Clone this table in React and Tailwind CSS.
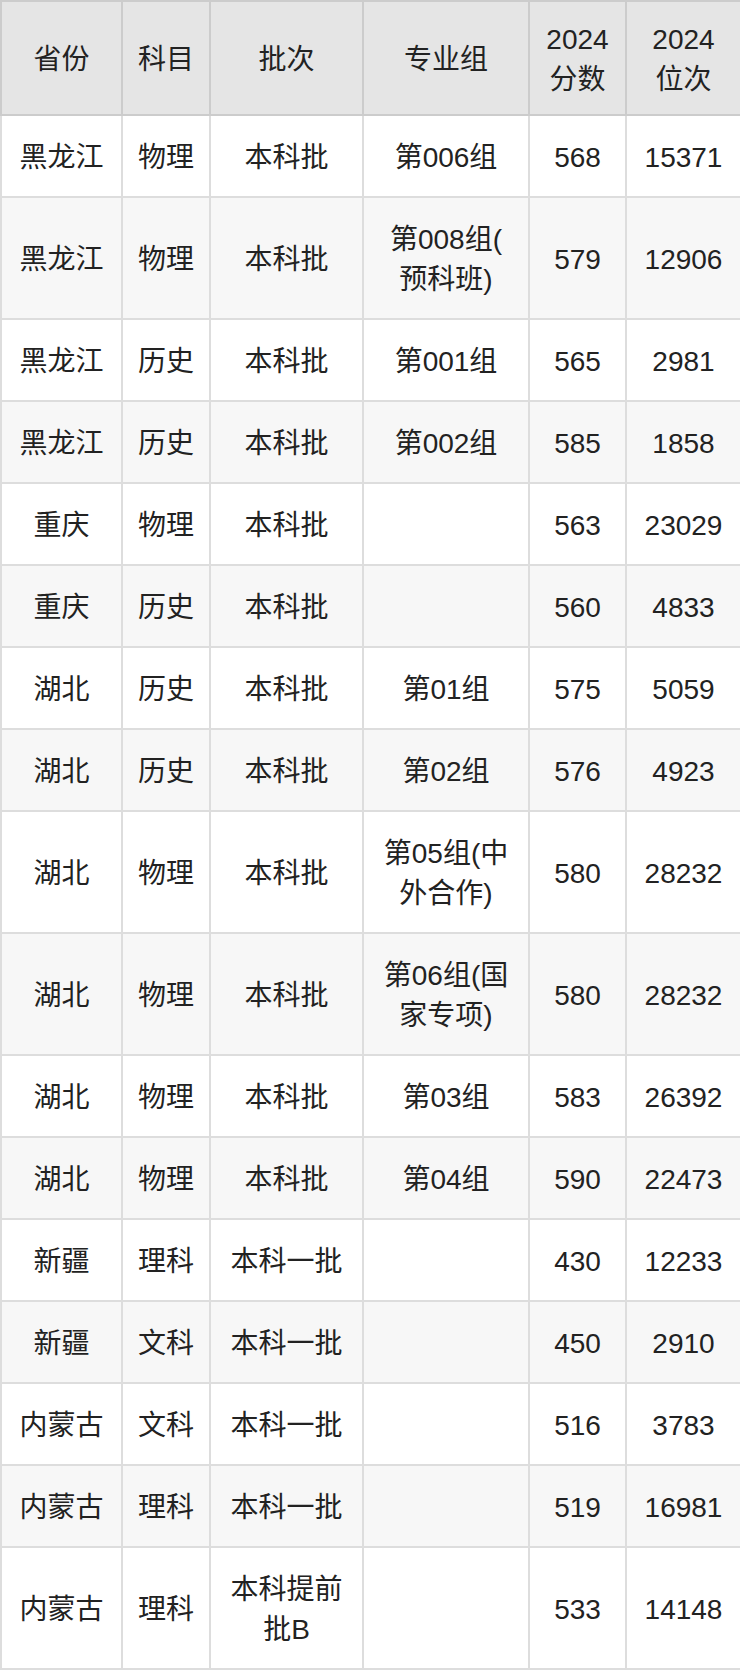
const rows = [
  ["黑龙江", "物理", "本科批", "第006组", "568", "15371"],
  ["黑龙江", "物理", "本科批", ["第008组(", "预科班)"], "579", "12906"],
  ["黑龙江", "历史", "本科批", "第001组", "565", "2981"],
  ["黑龙江", "历史", "本科批", "第002组", "585", "1858"],
  ["重庆", "物理", "本科批", "", "563", "23029"],
  ["重庆", "历史", "本科批", "", "560", "4833"],
  ["湖北", "历史", "本科批", "第01组", "575", "5059"],
  ["湖北", "历史", "本科批", "第02组", "576", "4923"],
  ["湖北", "物理", "本科批", ["第05组(中", "外合作)"], "580", "28232"],
  ["湖北", "物理", "本科批", ["第06组(国", "家专项)"], "580", "28232"],
  ["湖北", "物理", "本科批", "第03组", "583", "26392"],
  ["湖北", "物理", "本科批", "第04组", "590", "22473"],
  ["新疆", "理科", "本科一批", "", "430", "12233"],
  ["新疆", "文科", "本科一批", "", "450", "2910"],
  ["内蒙古", "文科", "本科一批", "", "516", "3783"],
  ["内蒙古", "理科", "本科一批", "", "519", "16981"],
  ["内蒙古", "理科", ["本科提前", "批B"], "", "533", "14148"],
];

const headers = ["省份", "科目", "批次", "专业组", ["2024", "分数"], ["2024", "位次"]];
const widths = [121, 88, 153, 166, 97, 115];

function Cell({ v }) {
  if (Array.isArray(v)) {
    return (
      <>
        {v[0]}
        <br />
        {v[1]}
      </>
    );
  }
  return v;
}

export default function App() {
  return (
    <div
      className="w-[740px] bg-white text-[#222]"
      style={{ fontFamily: '"Liberation Sans", "Noto Sans CJK SC", sans-serif' }}
    >
      <table className="w-[740px] table-fixed border-collapse text-[28px] leading-[40px]">
        <colgroup>
          {widths.map((w, i) => (
            <col key={i} style={{ width: w }} />
          ))}
        </colgroup>
        <thead>
          <tr>
            {headers.map((h, i) => (
              <th
                key={i}
                className="border-2 border-[#cccccc] bg-[#e5e5e5] px-2 pt-[18px] pb-[14px] text-center font-normal"
              >
                <Cell v={h} />
              </th>
            ))}
          </tr>
        </thead>
        <tbody>
          {rows.map((r, ri) => (
            <tr key={ri} className={ri % 2 === 1 ? "bg-[#f7f7f7]" : "bg-white"}>
              {r.map((c, ci) => (
                <td key={ci} className="border-2 border-[#dddddd] px-2 pt-[22px] pb-[18px] text-center">
                  <Cell v={c} />
                </td>
              ))}
            </tr>
          ))}
        </tbody>
      </table>
    </div>
  );
}
